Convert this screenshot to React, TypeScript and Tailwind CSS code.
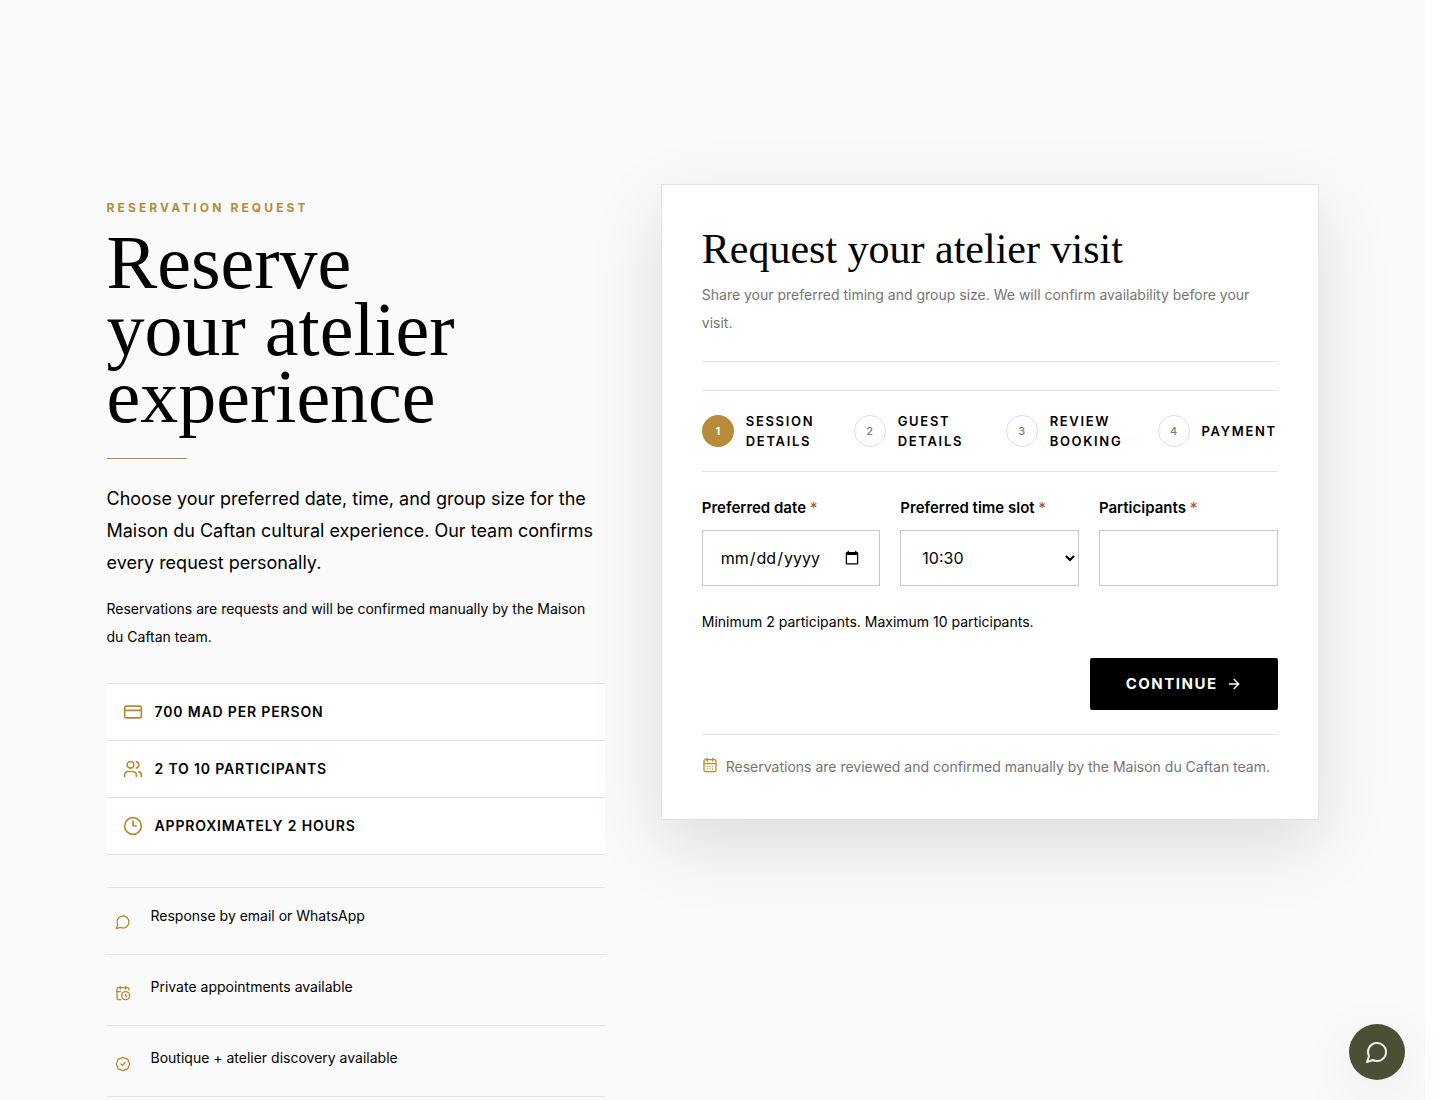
import React from 'react';
import {
  ArrowRight,
  BadgeCheck,
  CalendarClock,
  CalendarDays,
  Clock3,
  CreditCard,
  Users,
} from 'lucide-react';

interface IconProps {
  size?: number;
  strokeWidth?: number;
  className?: string;
}

interface IconLine {
  icon: React.ComponentType<IconProps>;
  label: string;
}

const ChatBubble: React.FC<IconProps> = ({ size = 24, strokeWidth = 2, className }) => (
  <svg
    width={size}
    height={size}
    viewBox="0 0 24 24"
    fill="none"
    stroke="currentColor"
    strokeWidth={strokeWidth}
    strokeLinecap="round"
    strokeLinejoin="round"
    className={className}
    aria-hidden="true"
  >
    <path d="M7.9 20A9 9 0 1 0 4 16.1L2 22Z" />
  </svg>
);

const facts: IconLine[] = [
  { icon: CreditCard, label: '700 MAD per person' },
  { icon: Users, label: '2 to 10 participants' },
  { icon: Clock3, label: 'Approximately 2 hours' },
];

const notes: IconLine[] = [
  { icon: ChatBubble, label: 'Response by email or WhatsApp' },
  { icon: CalendarClock, label: 'Private appointments available' },
  { icon: BadgeCheck, label: 'Boutique + atelier discovery available' },
];

const steps = ['Session details', 'Guest details', 'Review booking', 'Payment'];

const timeSlots = ['10:30', '14:30', '16:30'];

const fieldClass =
  'h-14 w-full min-w-0 border border-[#c8c8c8] bg-white px-[17px] text-base text-black outline-none focus:border-[#b88a3b]';

interface FieldProps {
  id: string;
  label: string;
  children: React.ReactNode;
}

const Field: React.FC<FieldProps> = ({ id, label, children }) => (
  <div className="flex min-w-0 flex-col gap-[10px]">
    <label htmlFor={id} className="text-[15px] leading-6 font-semibold whitespace-nowrap">
      {label} <span className="font-medium text-[#b45a1c]">*</span>
    </label>
    {children}
  </div>
);

const Intro: React.FC = () => (
  <section className="pt-4">
    <p className="text-xs leading-4 font-bold uppercase tracking-[0.26em] text-[#b88a3b]">Reservation request</p>
    <h1 className="mt-[13px] max-w-[400px] font-['Liberation_Serif',serif] text-[76px] leading-[67px]">
      Reserve your atelier experience
    </h1>
    <div className="mt-7 h-px w-20 bg-[#b88a3b]" />
    <p className="mt-6 text-lg leading-8">
      Choose your preferred date, time, and group size for the Maison du Caftan cultural experience. Our team confirms
      every request personally.
    </p>
    <p className="mt-4 text-sm leading-7">
      Reservations are requests and will be confirmed manually by the Maison du Caftan team.
    </p>

    <ul className="mt-8 border-t border-[#e2e2e2] bg-white">
      {facts.map(({ icon: Icon, label }) => (
        <li key={label} className="flex h-[57px] items-center gap-3 border-b border-[#e2e2e2] px-4">
          <Icon size={20} className="shrink-0 text-[#b88a3b]" />
          <span className="text-sm font-semibold uppercase tracking-[0.06em]">{label}</span>
        </li>
      ))}
    </ul>

    <ul className="mt-8 border-t border-[#e2e2e2]">
      {notes.map(({ icon: Icon, label }) => (
        <li key={label} className="flex items-start gap-3 border-b border-[#e2e2e2] pt-[18px] pb-4 first:pt-[14px]">
          <span className="mt-1 flex size-8 shrink-0 items-center justify-center text-[#b88a3b]">
            <Icon size={16} />
          </span>
          <span className="text-sm leading-7">{label}</span>
        </li>
      ))}
    </ul>
  </section>
);

const Stepper: React.FC = () => (
  <ol className="mt-7 grid grid-cols-4 gap-8 border-y border-[#e2e2e2] py-5">
    {steps.map((step, index) => (
      <li key={step} className="flex min-w-0 items-center gap-3">
        <span
          className={
            index === 0
              ? 'flex size-8 shrink-0 items-center justify-center rounded-full bg-[#b88a3b] text-[11px] font-bold text-white'
              : 'flex size-8 shrink-0 items-center justify-center rounded-full border border-[#dedede] text-[11px] font-medium text-[#7d8078]'
          }
        >
          {index + 1}
        </span>
        <span className="text-[13px] leading-5 font-semibold uppercase tracking-[0.13em]">{step}</span>
      </li>
    ))}
  </ol>
);

const BookingCard: React.FC = () => (
  <section className="border border-[#e2e2e2] bg-white p-10 shadow-[0_24px_70px_rgba(0,0,0,0.12)]">
    <header className="border-b border-[#e2e2e2] pb-6">
      <h2 className="font-['Liberation_Serif',serif] text-[42px] leading-[48px]">Request your atelier visit</h2>
      <p className="mt-2 text-sm leading-7 text-[#757575]">
        Share your preferred timing and group size. We will confirm availability before your visit.
      </p>
    </header>

    <Stepper />

    <form onSubmit={(e) => e.preventDefault()}>
      <div className="mt-6 grid grid-cols-3 gap-5">
        <Field id="date" label="Preferred date">
          <input id="date" type="date" className={fieldClass} />
        </Field>
        <Field id="slot" label="Preferred time slot">
          <select id="slot" defaultValue="10:30" className={fieldClass}>
            {timeSlots.map((slot) => (
              <option key={slot}>{slot}</option>
            ))}
          </select>
        </Field>
        <Field id="participants" label="Participants">
          <input id="participants" type="number" min={2} max={10} className={fieldClass} />
        </Field>
      </div>

      <p className="mt-6 text-sm leading-6">Minimum 2 participants. Maximum 10 participants.</p>

      <div className="mt-6 flex justify-end">
        <button
          type="submit"
          className="flex h-[52px] items-center gap-2 rounded-xs bg-black px-9 text-[15px] font-bold uppercase tracking-widest text-white"
        >
          Continue
          <ArrowRight size={16} />
        </button>
      </div>
    </form>

    <footer className="mt-6 flex items-start gap-2 border-t border-[#e2e2e2] pt-5">
      <CalendarDays size={16} className="mt-0.5 shrink-0 text-[#b88a3b]" />
      <p className="text-sm leading-6 text-[#757575]">
        Reservations are reviewed and confirmed manually by the Maison du Caftan team.
      </p>
    </footer>
  </section>
);

const App: React.FC = () => (
  <div className="min-h-screen bg-white pr-[15px] font-['Inter',sans-serif] text-black">
    <main className="min-h-screen overflow-hidden bg-[#fafafa] pt-[184px]">
      <div className="mx-auto grid max-w-[1212px] grid-cols-[25fr_33fr] items-start gap-14">
        <Intro />
        <BookingCard />
      </div>
    </main>

    <button
      type="button"
      aria-label="Chat with us"
      className="fixed right-[35px] bottom-5 flex size-14 items-center justify-center rounded-full bg-[#4a5033] text-[#f0f0f0] shadow-[0_16px_60px_rgba(0,0,0,0.08)]"
    >
      <ChatBubble size={24} />
    </button>
  </div>
);

export default App;
